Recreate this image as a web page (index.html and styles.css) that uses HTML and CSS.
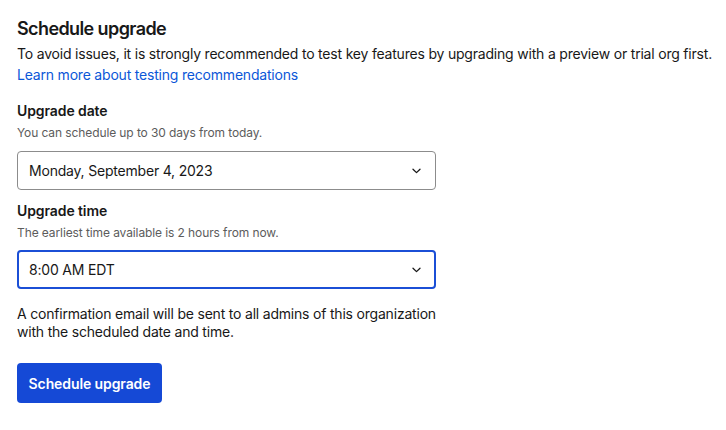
FILE: index.html
```html
<!DOCTYPE html>
<html lang="en">
<head>
<meta charset="utf-8">
<title>Schedule upgrade</title>
<link rel="stylesheet" href="styles.css">
</head>
<body>
<main class="page">
  <h1 class="title">Schedule upgrade</h1>
  <p class="intro">To avoid issues, it is strongly recommended to test key features by upgrading with a preview or trial org first.</p>
  <a class="link" href="#">Learn more about testing recommendations</a>

  <div class="field field-date">
    <div class="label">Upgrade date</div>
    <div class="help">You can schedule up to 30 days from today.</div>
    <div class="select">
      <span class="select-value">Monday, September 4, 2023</span>
      <svg class="chevron" width="9" height="6" viewBox="0 0 9 6"><path d="M1 1.2 L4.5 4.6 L8 1.2" fill="none" stroke="#181818" stroke-width="1.3" stroke-linecap="round" stroke-linejoin="round"/></svg>
    </div>
  </div>

  <div class="field field-time">
    <div class="label">Upgrade time</div>
    <div class="help">The earliest time available is 2 hours from now.</div>
    <div class="select select-focus">
      <span class="select-value">8:00 AM EDT</span>
      <svg class="chevron" width="9" height="6" viewBox="0 0 9 6"><path d="M1 1.2 L4.5 4.6 L8 1.2" fill="none" stroke="#181818" stroke-width="1.3" stroke-linecap="round" stroke-linejoin="round"/></svg>
    </div>
  </div>

  <p class="note">A confirmation email will be sent to all admins of this organization with the scheduled date and time.</p>

  <button class="btn" type="button">Schedule upgrade</button>
</main>
</body>
</html>
```
FILE: styles.css
```css
* { box-sizing: border-box; }
html, body { margin: 0; padding: 0; background: #fff; }
body {
  font-family: Inter, "Noto Sans", "Liberation Sans", sans-serif;
  color: #181818;
  font-size: 14px;
  letter-spacing: -0.2px;
}
.page {
  padding: 17px 0 0 17px;
  display: flex;
  flex-direction: column;
  align-items: flex-start;
}
.title {
  margin: 0;
  font-size: 18px;
  line-height: 24px;
  font-weight: 600;
  letter-spacing: -0.6px;
}
.intro {
  margin: 3px 0 0;
  font-size: 14px;
  line-height: 20px;
}
.link {
  margin-top: 1px;
  color: #0b57d8;
  text-decoration: none;
  font-size: 14px;
  line-height: 20px;
}
.field {
  display: flex;
  flex-direction: column;
  width: 419px;
}
.field-date { margin-top: 16px; }
.field-time { margin-top: 11px; }
.label {
  font-weight: 600;
  font-size: 14px;
  line-height: 20px;
  letter-spacing: -0.1px;
}
.help {
  margin-top: 4px;
  font-size: 12px;
  line-height: 16px;
  color: #5c5c5c;
  letter-spacing: -0.1px;
}
.select {
  margin-top: 10px;
  height: 39px;
  border: 1px solid #8c8c8c;
  border-radius: 4px;
  display: flex;
  align-items: center;
  justify-content: space-between;
  padding: 0 14px 0 11px;
}
.field-time .select { margin-top: 9px; }
.select-focus {
  border: 2px solid #1b4fd6;
  padding: 0 13px 0 10px;
}
.select-value {
  font-size: 14px;
  line-height: 20px;
}
.chevron { display: block; }
.note {
  margin: 16px 0 0;
  width: 430px;
  font-size: 14px;
  line-height: 17.5px;
}
.btn {
  margin-top: 23px;
  width: 145px;
  height: 40px;
  border: 0;
  border-radius: 4px;
  background: #1549d6;
  color: #fff;
  font-family: inherit;
  font-size: 14px;
  font-weight: 600;
  letter-spacing: -0.1px;
  padding: 0;
}
```
